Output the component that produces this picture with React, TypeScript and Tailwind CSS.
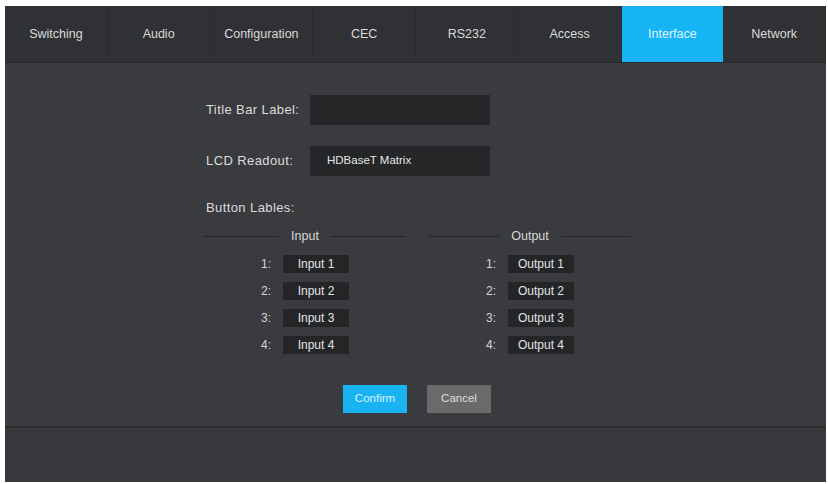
import React from "react";

const tabs = ["Switching", "Audio", "Configuration", "CEC", "RS232", "Access", "Interface", "Network"];
const active = "Interface";

function LabelCell({ n, value }: { n: number; value: string }) {
  return (
    <div className="flex items-center h-[18px]">
      <span className="w-[22px] text-[12px] text-[#d6d6d6]">{n}:</span>
      <div className="w-[66px] h-[18px] bg-[#232527] flex items-center justify-center text-[12px] text-[#e4e4e4]">
        {value}
      </div>
    </div>
  );
}

function Column({ title, prefix }: { title: string; prefix: string }) {
  return (
    <div className="w-[202px] flex flex-col items-center">
      <div className="w-full flex items-center gap-[12px] h-[14px]">
        <div className="flex-1 h-px bg-[#232527]" />
        <span className="text-[12.5px] text-[#d8d8d8] leading-[14px]">{title}</span>
        <div className="flex-1 h-px bg-[#232527]" />
      </div>
      <div className="mt-[12px] flex flex-col gap-[9px]">
        {[1, 2, 3, 4].map((n) => (
          <LabelCell key={n} n={n} value={`${prefix} ${n}`} />
        ))}
      </div>
    </div>
  );
}

export default function App() {
  return (
    <div
      className="w-[828px] h-[484px] bg-white pt-[6px] pl-[5px] pr-[2px] pb-[2px]"
      style={{ fontFamily: '"Liberation Sans", Arial, sans-serif' }}
    >
      <div className="w-full h-full bg-[#37393c] flex flex-col">
        <div className="h-[57px] flex bg-[#2f3134] border-b border-[#27292b]">
          {tabs.map((t) => (
            <div
              key={t}
              className={
                t === active
                  ? "flex-1 flex items-center justify-center text-[12.5px] bg-[#17b4f4] text-[#dff4ff]"
                  : "flex-1 flex items-center justify-center text-[12.5px] text-[#dadada] border-r border-[#2a2c2e]"
              }
            >
              {t}
            </div>
          ))}
        </div>
        <div className="h-[365px] bg-[#393b3e] pl-[201px] pt-[32px] border-b-2 border-[#2c2e30]">
          <div className="flex items-center h-[30px]">
            <span className="w-[104px] text-[13px] tracking-[0.4px] text-[#dcdcdc]">Title Bar Label:</span>
            <div className="w-[180px] h-[30px] bg-[#242628]" />
          </div>
          <div className="flex items-center h-[30px] mt-[21px]">
            <span className="w-[104px] text-[13px] tracking-[0.4px] text-[#dcdcdc]">LCD Readout:</span>
            <div className="w-[180px] h-[30px] bg-[#242628] flex items-center pl-[17px] text-[11.5px] text-[#e6e6e6]">
              HDBaseT Matrix
            </div>
          </div>
          <div className="mt-[25px] text-[13px] tracking-[0.4px] text-[#dcdcdc] leading-[14px]">Button Lables:</div>
          <div className="mt-[14px] -ml-[2px] flex gap-[23px]">
            <Column title="Input" prefix="Input" />
            <Column title="Output" prefix="Output" />
          </div>
          <div className="mt-[31px] ml-[137px] flex gap-[20px]">
            <button className="w-[64px] h-[28px] bg-[#1ab3f2] text-[11.5px] text-[#d8f2ff]">Confirm</button>
            <button className="w-[64px] h-[28px] bg-[#6a6a6b] text-[11.5px] text-[#dedede]">Cancel</button>
          </div>
        </div>
        <div className="flex-1 bg-[#37393c]" />
      </div>
    </div>
  );
}
